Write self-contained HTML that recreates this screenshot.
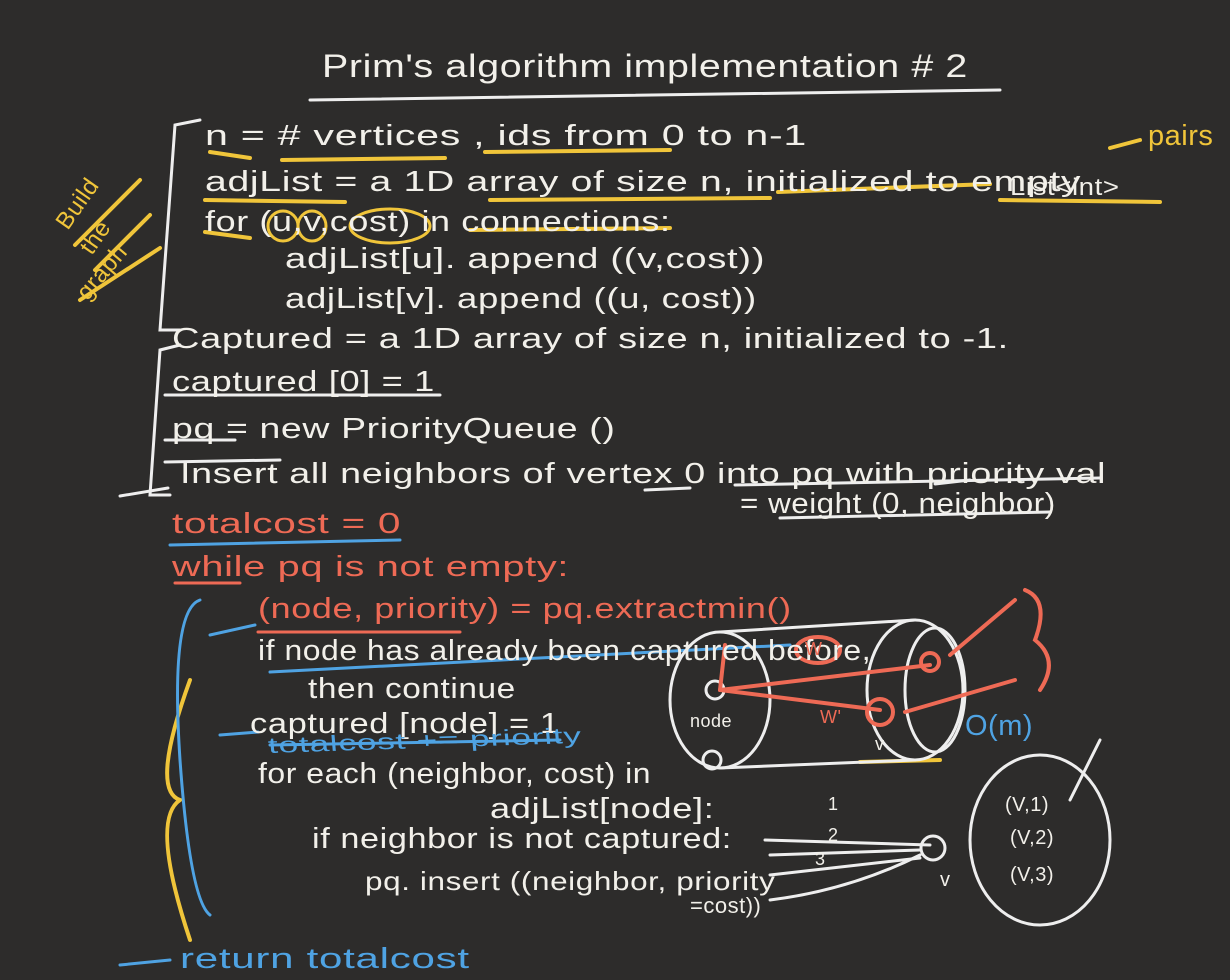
<!DOCTYPE html>
<html><head><meta charset="utf-8"><style>
html,body{margin:0;padding:0;}
body{width:1230px;height:980px;background:#2d2c2b;position:relative;overflow:hidden;font-family:"Liberation Sans",sans-serif;}
.t{position:absolute;white-space:nowrap;color:#f2f0ea;font-size:29px;line-height:1;letter-spacing:0.5px;transform-origin:0 50%;}
.r{color:#ee6a55;}
.b{color:#4fa3e3;}
.y{color:#f0c53a;}
svg{position:absolute;left:0;top:0;}
</style></head><body>
<svg width="1230" height="980" fill="none" stroke-linecap="round">
 <path d="M310 100 L1000 90" stroke="#eee" stroke-width="3"/>
 <g stroke="#f0c53a" stroke-width="4">
  <path d="M210 152 L250 158"/><path d="M282 160 L445 158"/><path d="M485 152 L670 150"/>
  <path d="M205 200 L345 202"/><path d="M490 200 L770 198"/><path d="M778 192 L990 184"/>
  <path d="M1000 200 L1160 202"/><path d="M1110 148 L1140 140"/>
  <path d="M205 232 L250 238"/><path d="M470 230 L670 228"/>
  <path d="M75 245 L140 180"/><path d="M95 270 L150 215"/><path d="M80 300 L160 248"/>
  <path d="M860 762 L940 760"/>
  <path d="M190 680 Q150 790 180 800 Q150 820 190 940"/>
 </g>
 <g stroke="#f0c53a" stroke-width="3">
  <ellipse cx="283" cy="226" rx="15" ry="15"/><ellipse cx="312" cy="226" rx="14" ry="15"/><ellipse cx="390" cy="226" rx="40" ry="17"/>
 </g>
 <g stroke="#eee" stroke-width="3">
  <path d="M200 120 L175 125 L160 330 L180 330"/>
  <path d="M180 345 L160 350 L150 495 L170 495"/>
  <path d="M165 395 L440 395"/><path d="M165 440 L235 440"/><path d="M165 462 L280 460"/>
  <path d="M120 496 L168 488"/>
  <path d="M735 485 L1100 478"/><path d="M780 518 L1050 512"/><path d="M935 484 L970 480"/>
  <path d="M645 490 L690 488"/>
 </g>
 <g stroke="#4fa3e3" stroke-width="3">
  <path d="M170 545 L400 540"/>
  <path d="M200 600 Q170 610 180 760 Q190 900 210 915"/>
  <path d="M210 635 L255 625"/><path d="M220 735 L258 732"/>
  <path d="M270 672 L790 645"/>
  <path d="M270 745 L560 740"/>
  <path d="M120 965 L170 960"/>
 </g>
 <g stroke="#ee6a55" stroke-width="3">
  <path d="M258 632 L460 632"/><path d="M175 583 L240 583"/>
 </g>
 <g stroke="#eee" stroke-width="3">
  <ellipse cx="720" cy="700" rx="50" ry="68"/>
  <ellipse cx="915" cy="690" rx="48" ry="70"/>
  <ellipse cx="935" cy="690" rx="30" ry="62"/>
  <path d="M720 632 L915 620"/><path d="M720 768 L915 760"/>
  <circle cx="715" cy="690" r="9"/><circle cx="712" cy="760" r="9"/>
  <path d="M765 840 L930 845"/><path d="M770 855 L920 850"/><path d="M770 875 L920 858"/>
  <path d="M770 900 Q850 890 920 855"/>
  <circle cx="933" cy="848" r="12"/>
  <ellipse cx="1040" cy="840" rx="70" ry="85"/>
  <path d="M1070 800 L1100 740"/>
 </g>
 <g stroke="#ee6a55" stroke-width="4">
  <path d="M720 690 L880 710"/><path d="M720 690 L930 665"/>
  <circle cx="880" cy="712" r="13"/><circle cx="930" cy="662" r="9"/>
  <path d="M725 645 L720 690"/>
  <ellipse cx="818" cy="650" rx="22" ry="13"/>
  <path d="M950 655 L1015 600"/><path d="M905 712 L1015 680"/>
  <path d="M1025 590 Q1050 600 1035 640 Q1060 660 1040 690"/>
 </g>
</svg>
<div class="t" style="left:322px;top:50px;font-size:32px;transform:scaleX(1.23);">Prim's algorithm implementation # 2</div>
<div class="t y" style="left:62px;top:215px;font-size:24px;transform:rotate(-55deg);">Build</div>
<div class="t y" style="left:86px;top:240px;font-size:24px;transform:rotate(-55deg);">the</div>
<div class="t y" style="left:82px;top:285px;font-size:24px;transform:rotate(-50deg);">graph</div>
<div class="t" style="left:205px;top:122px;transform:scaleX(1.42);">n = # vertices , ids from 0 to n-1</div>
<div class="t y" style="left:1148px;top:122px;">pairs</div>
<div class="t" style="left:205px;top:168px;transform:scaleX(1.35);">adjList = a 1D array of size n, initialized to empty</div>
<div class="t" style="left:1010px;top:176px;font-size:24px;transform:scaleX(1.15);">List&lt;int&gt;</div>
<div class="t" style="left:205px;top:208px;transform:scaleX(1.24);">for (u,v,cost) in connections:</div>
<div class="t" style="left:285px;top:245px;transform:scaleX(1.32);">adjList[u]. append ((v,cost))</div>
<div class="t" style="left:285px;top:285px;transform:scaleX(1.26);">adjList[v]. append ((u, cost))</div>
<div class="t" style="left:172px;top:325px;transform:scaleX(1.31);">Captured = a 1D array of size n, initialized to -1.</div>
<div class="t" style="left:172px;top:368px;transform:scaleX(1.25);">captured [0] = 1</div>
<div class="t" style="left:172px;top:415px;transform:scaleX(1.29);">pq = new PriorityQueue ()</div>
<div class="t" style="left:180px;top:460px;transform:scaleX(1.3);">Insert all neighbors of vertex 0 into pq with priority val</div>
<div class="t" style="left:740px;top:490px;transform:scaleX(1.08);">= weight (0, neighbor)</div>
<div class="t r" style="left:172px;top:510px;transform:scaleX(1.4);">totalcost = 0</div>
<div class="t r" style="left:172px;top:553px;transform:scaleX(1.37);">while pq is not empty:</div>
<div class="t r" style="left:258px;top:595px;transform:scaleX(1.24);">(node, priority) = pq.extractmin()</div>
<div class="t" style="left:258px;top:637px;transform:scaleX(1.1);">if node has already been captured before,</div>
<div class="t" style="left:308px;top:675px;transform:scaleX(1.15);">then continue</div>
<div class="t" style="left:250px;top:710px;transform:scaleX(1.19);">captured [node] = 1</div>
<div class="t b" style="left:268px;top:735px;font-size:22px;transform:scaleX(1.6) rotate(-3deg);">totalcost += priority</div>
<div class="t" style="left:258px;top:760px;transform:scaleX(1.1);">for each (neighbor, cost) in</div>
<div class="t" style="left:490px;top:795px;transform:scaleX(1.25);">adjList[node]:</div>
<div class="t" style="left:312px;top:825px;transform:scaleX(1.18);">if neighbor is not captured:</div>
<div class="t" style="left:365px;top:868px;font-size:26px;transform:scaleX(1.21);">pq. insert ((neighbor, priority</div>
<div class="t" style="left:690px;top:895px;font-size:22px;">=cost))</div>
<div class="t b" style="left:180px;top:945px;transform:scaleX(1.45);">return totalcost</div>
<div class="t b" style="left:965px;top:712px;">O(m)</div>
<div class="t r" style="left:805px;top:640px;font-size:18px;">W</div>
<div class="t r" style="left:820px;top:708px;font-size:18px;">W'</div>
<div class="t" style="left:690px;top:712px;font-size:18px;">node</div>
<div class="t" style="left:875px;top:735px;font-size:18px;">v</div>
<div class="t" style="left:940px;top:870px;font-size:20px;">v</div>
<div class="t" style="left:828px;top:795px;font-size:18px;">1</div>
<div class="t" style="left:828px;top:826px;font-size:18px;">2</div>
<div class="t" style="left:815px;top:850px;font-size:18px;">3</div>
<div class="t" style="left:1005px;top:795px;font-size:20px;">(V,1)</div>
<div class="t" style="left:1010px;top:828px;font-size:20px;">(V,2)</div>
<div class="t" style="left:1010px;top:865px;font-size:20px;">(V,3)</div>
</body></html>
